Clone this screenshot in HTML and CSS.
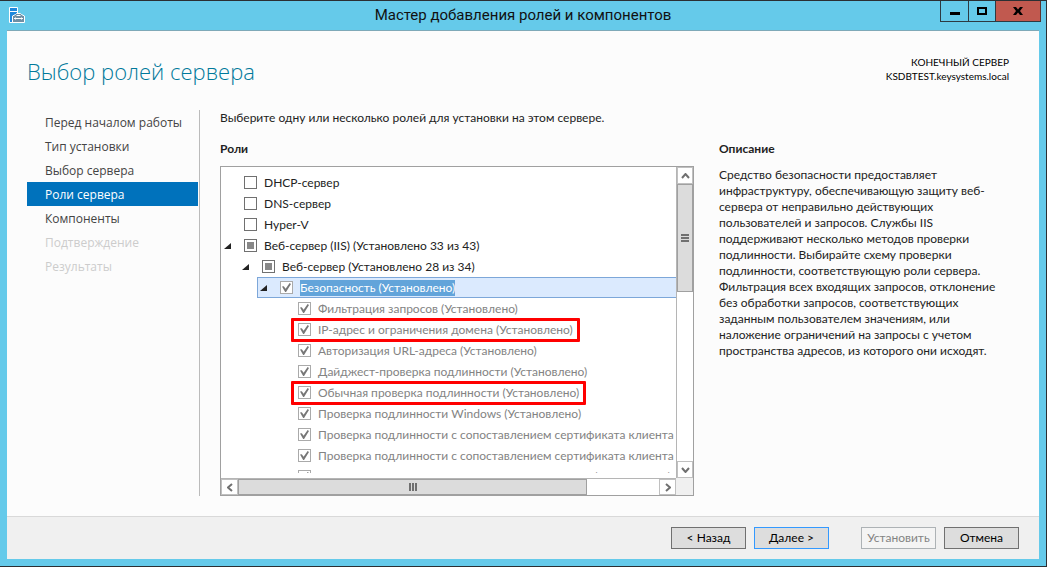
FILE: index.html
```html
<!DOCTYPE html>
<html lang="ru">
<head>
  <meta charset="UTF-8">
  <meta name="viewport" content="width=device-width, initial-scale=1.0">
  <title>Мастер добавления ролей и компонентов</title>
  <link rel="stylesheet" href="styles.css">
</head>
<body>

  <div class="window">
    <header class="titlebar">
      <svg class="app-icon" width="16" height="16" viewBox="0 0 16 16">
        <path d="M0.5 0.5h8v15h-8z" fill="#1e88dc" stroke="#fff"/>
        <path d="M1 4.5h7" stroke="#fff"/>
        <path d="M3.500 15.500v-6.500l3-1.500 1-1h4l1 1 3 1.500v6.500z" fill="#6f8fa5" stroke="#fff"/>
        <path d="M7.500 8.500h4M5 11.500h9M6.500 10.500v2M12.500 10.500v2" fill="none" stroke="#fff"/>
      </svg>
      <h1>Мастер добавления ролей и компонентов</h1>
      <div class="window-buttons">
        <button type="button" class="min" aria-label="Свернуть">
          <svg width="10" height="9" viewBox="0 0 10 9"><path d="M0 5h10v3h-10z"/></svg>
        </button>
        <button type="button" class="max" aria-label="Развернуть">
          <svg width="10" height="8" viewBox="0 0 10 8"><path d="M1 1h8v6h-8z" fill="none" stroke="#000" stroke-width="2"/></svg>
        </button>
        <button type="button" class="close" aria-label="Закрыть">
          <svg width="10" height="8" viewBox="0 0 10 8"><path d="M0 0h3l2 2.500 2-2.500h3l-3 4 3 4h-3l-2-2.500-2 2.500h-3l3-4z"/></svg>
        </button>
      </div>
    </header>

    <div class="page">
      <div class="page-head">
        <h2>Выбор ролей сервера</h2>
        <p class="server">КОНЕЧНЫЙ СЕРВЕР<br>KSDBTEST.keysystems.local</p>
      </div>

      <div class="content">
        <nav class="steps">
          <a href="#">Перед началом работы</a>
          <a href="#">Тип установки</a>
          <a href="#">Выбор сервера</a>
          <a href="#" class="active" aria-current="step">Роли сервера</a>
          <a href="#">Компоненты</a>
          <a class="disabled">Подтверждение</a>
          <a class="disabled">Результаты</a>
        </nav>

        <main class="main">
          <p class="hint">Выберите одну или несколько ролей для установки на этом сервере.</p>
          <div class="columns">
            <section class="roles">
              <h3>Роли</h3>
              <div class="listbox">
                <ul class="tree">
                  <li><label><input type="checkbox"><span>DHCP-сервер</span></label></li>
                  <li><label><input type="checkbox"><span>DNS-сервер</span></label></li>
                  <li><label><input type="checkbox"><span>Hyper-V</span></label></li>
                  <li class="open"><label><input type="checkbox" class="partial"><span>Веб-сервер (IIS) (Установлено 33 из 43)</span></label></li>
                  <li class="open level1"><label><input type="checkbox" class="partial"><span>Веб-сервер (Установлено 28 из 34)</span></label></li>
                  <li class="open level2 selected"><label><input type="checkbox" checked disabled><span>Безопасность (Установлено)</span></label></li>
                  <li class="level3"><label><input type="checkbox" checked disabled><span>Фильтрация запросов (Установлено)</span></label></li>
                  <li class="level3"><label class="marked"><input type="checkbox" checked disabled><span>IP-адрес и ограничения домена (Установлено)</span></label></li>
                  <li class="level3"><label><input type="checkbox" checked disabled><span>Авторизация URL-адреса (Установлено)</span></label></li>
                  <li class="level3"><label><input type="checkbox" checked disabled><span>Дайджест-проверка подлинности (Установлено)</span></label></li>
                  <li class="level3"><label class="marked"><input type="checkbox" checked disabled><span>Обычная проверка подлинности (Установлено)</span></label></li>
                  <li class="level3"><label><input type="checkbox" checked disabled><span>Проверка подлинности Windows (Установлено)</span></label></li>
                  <li class="level3"><label><input type="checkbox" checked disabled><span>Проверка подлинности с сопоставлением сертификата клиента (Установлено)</span></label></li>
                  <li class="level3"><label><input type="checkbox" checked disabled><span>Проверка подлинности с сопоставлением сертификата клиента IIS (Установлено)</span></label></li>
                  <li class="level3"><label><input type="checkbox" checked disabled><span>Централизованная поддержка SSL-сертификатов (Установлено)</span></label></li>
                </ul>
                <div class="scroll vertical">
                  <button type="button" aria-label="Вверх"><svg width="9" height="6" viewBox="0 0 9 6"><path d="M1 5l3.500-4 3.500 4"/></svg></button>
                  <div class="track"><div class="thumb"><i></i></div></div>
                  <button type="button" aria-label="Вниз"><svg width="9" height="6" viewBox="0 0 9 6"><path d="M1 1l3.500 4 3.500-4"/></svg></button>
                </div>
                <div class="scroll horizontal">
                  <button type="button" aria-label="Влево"><svg width="6" height="9" viewBox="0 0 6 9"><path d="M5 1l-4 3.500 4 3.500"/></svg></button>
                  <div class="track"><div class="thumb"><i></i></div></div>
                  <button type="button" aria-label="Вправо"><svg width="6" height="9" viewBox="0 0 6 9"><path d="M1 1l4 3.500-4 3.500"/></svg></button>
                </div>
                <div class="corner"></div>
              </div>
            </section>

            <section class="description">
              <h3>Описание</h3>
              <p>Средство безопасности предоставляет инфраструктуру, обеспечивающую защиту веб-сервера от неправильно действующих пользователей и запросов. Службы IIS поддерживают несколько методов проверки подлинности. Выбирайте схему проверки подлинности, соответствующую роли сервера. Фильтрация всех входящих запросов, отклонение без обработки запросов, соответствующих заданным пользователем значениям, или наложение ограничений на запросы с учетом пространства адресов, из которого они исходят.</p>
            </section>
          </div>
        </main>
      </div>

      <footer class="actions">
        <button type="button">&lt; Назад</button>
        <button type="button" class="default">Далее &gt;</button>
        <button type="button" class="install" disabled>Установить</button>
        <button type="button">Отмена</button>
      </footer>
    </div>
  </div>

</body>
</html>
```
FILE: styles.css
```css
* {
  box-sizing: border-box;
}
body {
  margin: 0;
  font-family: Lato, "Open Sans", sans-serif;
  font-size: 12px;
  line-height: 16px;
  color: #222;
}
h1, h2, h3, p, ul {
  margin: 0;
  padding: 0;
}
button {
  font: inherit;
  padding: 0;
}
.window {
  display: flex;
  flex-direction: column;
  height: 100vh;
  padding: 0 7px 7px;
  background: #65caea;
  border: 1px solid #2b2f33;
  border-left: none;
}

/* title bar */
.titlebar {
  display: grid;
  grid-template-columns: 1fr auto 1fr;
  height: 29px;
}
.app-icon {
  margin: 6px 0 0 2px;
}
.titlebar h1 {
  font-family: Roboto, sans-serif;
  font-size: 15px;
  font-weight: 400;
  line-height: 29px;
  color: #111;
}
.window-buttons {
  display: flex;
  justify-content: flex-end;
  height: 21px;
  margin-right: -2px;
}
.window-buttons button {
  display: flex;
  align-items: center;
  justify-content: center;
  width: 28px;
  background: #65caea;
  border: 1px solid #2d3a42;
  border-top: none;
  border-right: none;
}
.window-buttons .max {
  width: 27px;
}
.window-buttons .close {
  width: 46px;
  background: #c1594f;
  border-right: 1px solid #5d3330;
}

/* page */
.page {
  flex: 1;
  min-height: 0;
  display: flex;
  flex-direction: column;
  background: #fcfcfc;
  border-top: 1px solid #7fa9b8;
}
.page-head {
  display: flex;
  justify-content: space-between;
  padding: 24px 30px 0 20px;
  height: 79px;
}
.page-head h2 {
  font-family: "Open Sans", sans-serif;
  font-size: 22px;
  font-weight: 300;
  line-height: 32px;
  color: #00799b;
}
.server {
  font-size: 10px;
  line-height: 14px;
  text-align: right;
  color: #000;
}
.content {
  flex: 1;
  min-height: 0;
  display: flex;
  padding: 0 30px 20px 20px;
}
.steps {
  width: 173px;
  flex: none;
  padding-right: 1px;
  border-right: 1px solid #bbb;
}
.steps a {
  display: block;
  padding: 2px 0 0 18px;
  font-family: "Open Sans", sans-serif;
  font-size: 12px;
  line-height: 22px;
  color: #444;
  text-decoration: none;
}
.steps .active {
  background: #0072bc;
  color: #fff;
}
.steps .disabled {
  color: #ccc;
}
.main {
  flex: 1;
  min-width: 0;
  display: flex;
  flex-direction: column;
  padding-left: 20px;
}
.columns {
  flex: 1;
  min-height: 0;
  display: grid;
  grid-template-columns: 474fr 290fr;
  grid-template-rows: minmax(0, 1fr);
  gap: 25px;
  padding-top: 15px;
}
h3 {
  font-size: 12px;
  font-weight: 700;
  line-height: 16px;
}
.roles {
  display: flex;
  flex-direction: column;
  min-width: 0;
}
.description p {
  margin-top: 10px;
}

/* roles list */
.listbox {
  flex: 1;
  min-height: 0;
  display: grid;
  grid-template-columns: minmax(0, 1fr) 17px;
  grid-template-rows: minmax(0, 1fr) 17px;
  margin-top: 9px;
  background: #fff;
  border: 1px solid #a0a0a0;
}
.tree {
  margin: 5px 0;
  overflow: hidden;
  list-style: none;
  white-space: nowrap;
}
.tree li {
  position: relative;
  height: 21px;
  padding-left: 23px;
}
.tree .level1 {
  padding-left: 41px;
}
.tree .level2 {
  padding-left: 59px;
}
.tree .level3 {
  padding-left: 77px;
}
.tree label {
  position: relative;
  display: inline-flex;
  align-items: center;
  gap: 7px;
  height: 21px;
}
.tree input {
  appearance: none;
  display: grid;
  place-items: center;
  width: 13px;
  height: 13px;
  margin: 0;
  border: 1px solid #707070;
  background: #fff;
}
.tree .partial::before {
  content: "";
  width: 7px;
  height: 7px;
  background: #888;
}
.tree input:disabled {
  border-color: #aaa;
}
.tree input:checked::before {
  content: "";
  width: 9px;
  height: 9px;
  background: #777;
  clip-path: polygon(0 40%, 20% 35%, 40% 65%, 85% 0, 100% 10%, 45% 100%, 35% 100%);
}
.tree input:disabled + span {
  color: #838383;
}
.tree .open::before {
  content: "";
  position: absolute;
  margin: 8px 0 0 -20px;
  width: 7px;
  height: 6px;
  background: #222;
  clip-path: polygon(100% 0, 100% 100%, 0 100%);
}
.tree .selected {
  margin-left: 36px;
  padding-left: 22px;
  background: #dbeafe;
  border: 1px solid #7da7d9;
  border-right: none;
}
.tree .selected::before {
  margin-top: 7px;
}
.tree .selected label {
  height: 19px;
}
.tree .selected input + span {
  background: #62a4da;
  color: #fff;
}
.marked::after {
  content: "";
  position: absolute;
  inset: -1px -7px -2px;
  border: 3px solid #f00;
  border-radius: 1px;
}

/* scroll bars */
.scroll {
  display: flex;
  background: #fff;
}
.vertical {
  flex-direction: column;
  border-left: 1px solid #b5b5b5;
}
.horizontal {
  border-top: 1px solid #b5b5b5;
}
.scroll button {
  flex: 0 0 17px;
  display: flex;
  align-items: center;
  justify-content: center;
  background: #fff;
  border: 1px solid #c0c0c0;
}
.scroll path {
  fill: none;
  stroke: #707070;
  stroke-width: 2;
}
.track {
  flex: 1;
  display: flex;
}
.vertical .track {
  flex-direction: column;
}
.thumb {
  display: flex;
  align-items: center;
  justify-content: center;
  background: #dcdcdc;
  border: 1px solid #a0a0a0;
}
.vertical .thumb {
  height: 39%;
}
.horizontal .thumb {
  width: 83%;
}
.thumb i {
  width: 8px;
  height: 8px;
  background: repeating-linear-gradient(90deg, #707070 0 2px, #dcdcdc 2px 3px);
}
.vertical .thumb i {
  background: repeating-linear-gradient(#707070 0 2px, #dcdcdc 2px 3px);
}
.corner {
  background: #f0f0f0;
}

/* bottom buttons */
.actions {
  display: flex;
  justify-content: flex-end;
  gap: 8px;
  height: 43px;
  padding: 10px 20px 0 0;
  background: #f0f0f0;
  border-top: 1px solid #d9d9d9;
}
.actions button {
  width: 75px;
  height: 22px;
  line-height: 20px;
  color: #000;
  background: #ddd;
  border: 1px solid #707070;
}
.actions .default {
  border-color: #3399ff;
}
.actions .install {
  margin-left: 24px;
  color: #838383;
  background: #f4f4f4;
  border-color: #adb2b5;
}
```
